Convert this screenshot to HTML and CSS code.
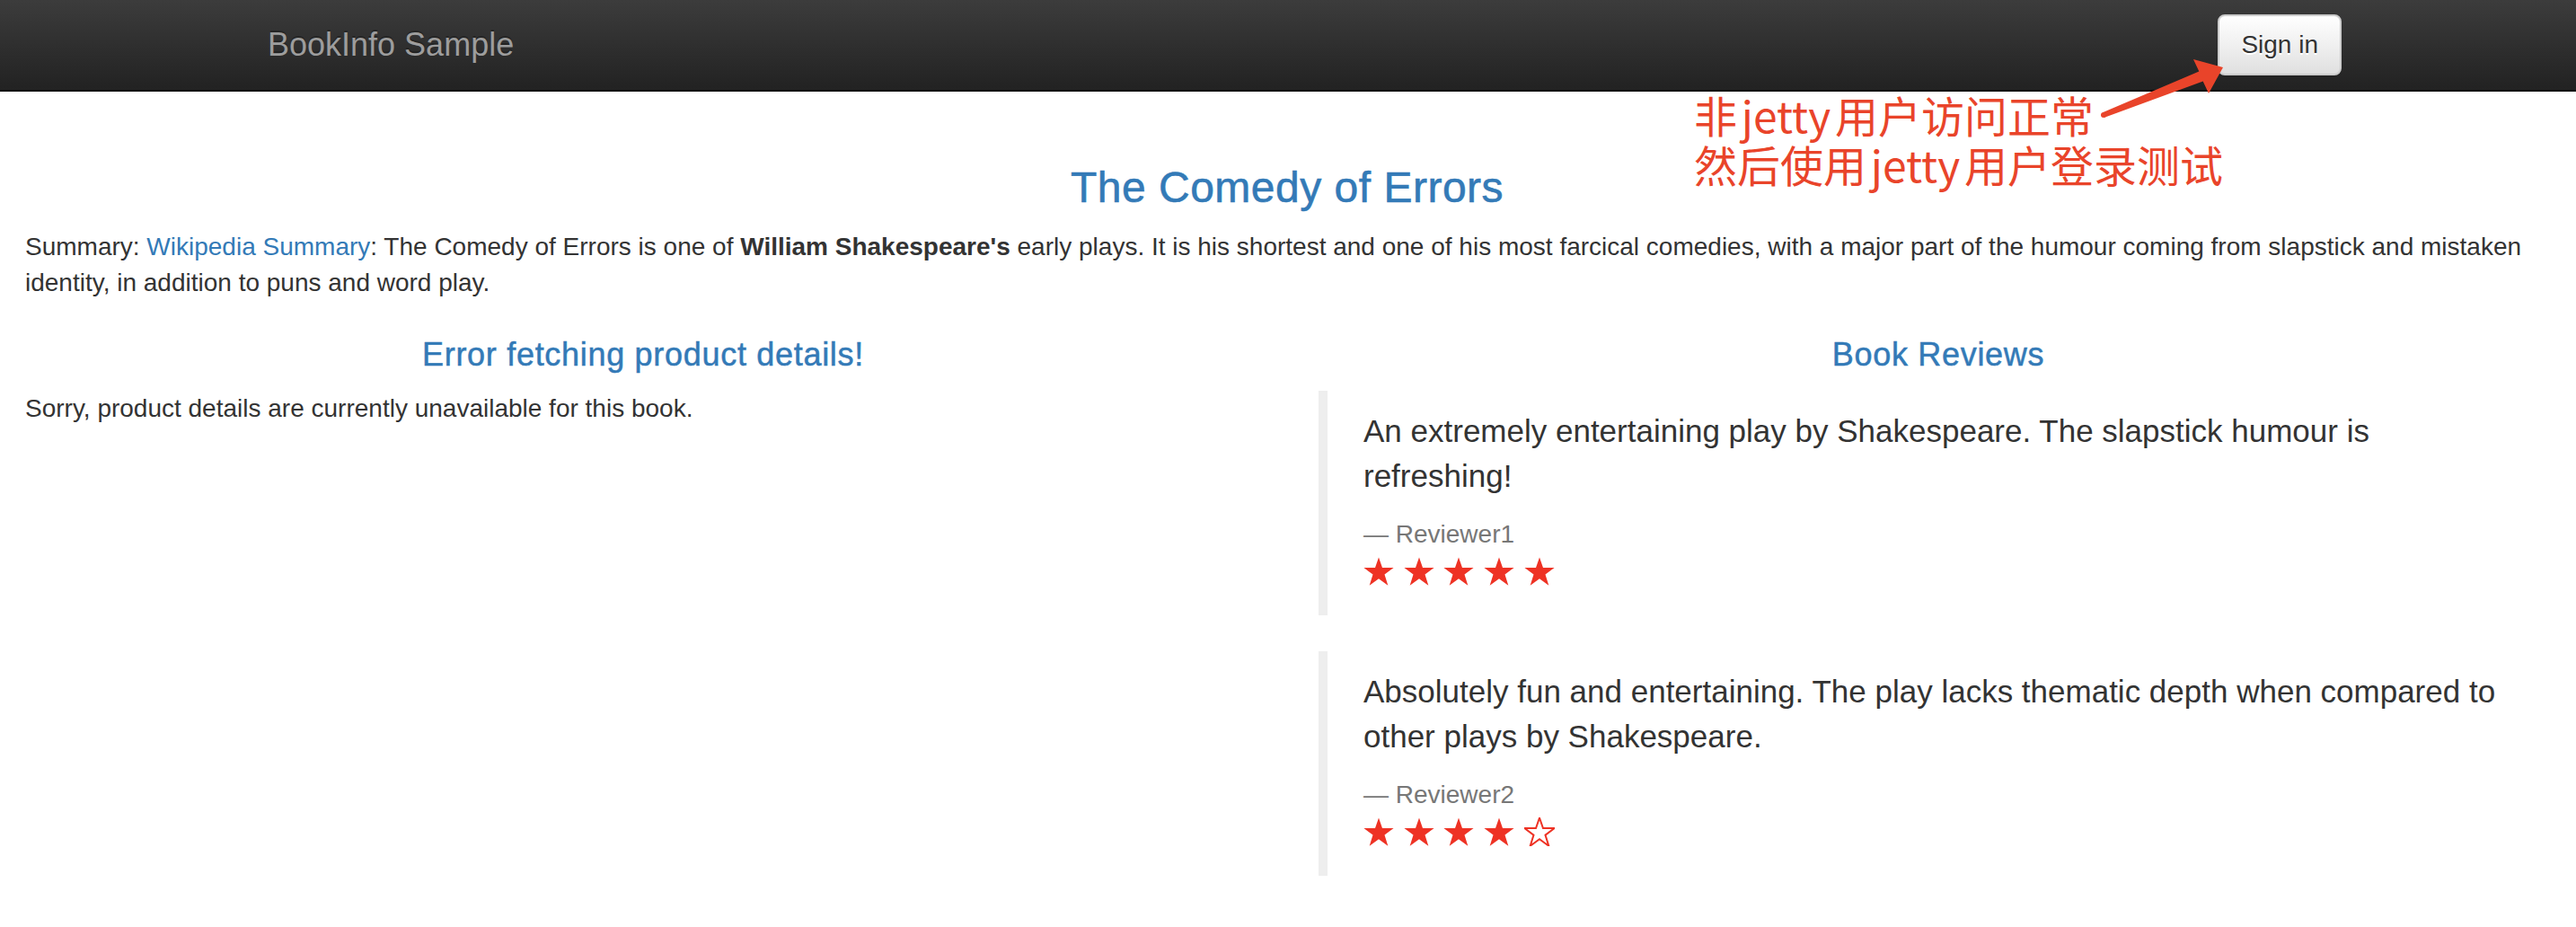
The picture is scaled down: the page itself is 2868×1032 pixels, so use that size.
FILE: index.html
```html
<!DOCTYPE html>
<html lang="en">
<head>
<meta charset="utf-8">
<title>Simple Bookstore App</title>
<link rel="stylesheet" href="styles.css">
</head>
<body>
<svg class="defs" width="0" height="0" aria-hidden="true">
  <defs>
    <symbol id="star" viewBox="0 0 34 32">
      <polygon points="17,0.5 21,12 33.6,12.1 23.5,19.6 27.3,31.7 17,24.3 6.7,31.7 10.5,19.6 0.4,12.1 13,12"/>
    </symbol>
  </defs>
</svg>

<nav class="navbar">
  <div class="navbar-inner">
    <a class="brand" href="#">BookInfo Sample</a>
    <button class="btn-signin" type="button">Sign in</button>
  </div>
</nav>

<div class="annotation">
  <div class="note">非 jetty 用户访问正常<br>然后使用 jetty 用户登录测试</div>
  <svg class="arrow" width="150" height="80" viewBox="0 0 150 80">
    <circle cx="10" cy="68" r="3"/>
    <polygon points="8.9,65.2 116.3,19.4 110,6 143,15 127,44 120.7,30.6 11.1,70.8"/>
  </svg>
</div>

<main class="page">
  <h3 class="title">The Comedy of Errors</h3>
  <p class="summary"><span>Summary: </span><a href="#">Wikipedia Summary</a><span>: The Comedy of Errors is one of </span><b>William Shakespeare's</b><span> early plays. It is his shortest and one of his most farcical comedies, with a major part of the humour coming from slapstick and mistaken </span><span>identity, in addition to puns and word play.</span></p>

  <div class="cols">
    <section class="col col-left">
      <h4 class="col-title">Error fetching product details!</h4>
      <p>Sorry, product details are currently unavailable for this book.</p>
    </section>
    <section class="col col-right">
      <h4 class="col-title">Book Reviews</h4>
      <blockquote class="review">
        <p>An extremely entertaining play by Shakespeare. The slapstick humour is refreshing!</p>
        <small class="reviewer">Reviewer1</small>
        <div class="stars">
          <svg class="star"><use href="#star"/></svg>
          <svg class="star"><use href="#star"/></svg>
          <svg class="star"><use href="#star"/></svg>
          <svg class="star"><use href="#star"/></svg>
          <svg class="star"><use href="#star"/></svg>
        </div>
      </blockquote>
      <blockquote class="review">
        <p>Absolutely fun and entertaining. The play lacks thematic depth when compared to other plays by Shakespeare.</p>
        <small class="reviewer">Reviewer2</small>
        <div class="stars">
          <svg class="star"><use href="#star"/></svg>
          <svg class="star"><use href="#star"/></svg>
          <svg class="star"><use href="#star"/></svg>
          <svg class="star"><use href="#star"/></svg>
          <svg class="star star-empty"><use href="#star"/></svg>
        </div>
      </blockquote>
    </section>
  </div>
</main>
</body>
</html>
```

FILE: styles.css
```css
* { box-sizing: border-box; }

html, body {
  margin: 0;
  padding: 0;
  background: #fff;
}

body {
  font-family: "Liberation Sans", Arial, sans-serif;
  font-size: 28px;
  line-height: 40px;
  color: #333;
  position: relative;
}

.defs { position: absolute; width: 0; height: 0; overflow: hidden; }

a { color: #337ab7; text-decoration: none; }

/* Navbar */
.navbar {
  height: 102px;
  background: linear-gradient(to bottom, #3c3c3c 0, #222 100%);
  border-bottom: 2px solid #080808;
  margin-bottom: 40px;
}

.navbar-inner {
  width: 2346px;
  margin: 0 auto;
  height: 100px;
  display: flex;
  justify-content: space-between;
  align-items: flex-start;
}

.brand {
  display: block;
  padding: 30px 30px 30px 37px;
  font-size: 36px;
  line-height: 40px;
  color: #9d9d9d;
  text-shadow: 0 -2px 0 rgba(0, 0, 0, .25);
}

.btn-signin {
  margin-top: 16px;
  height: 68px;
  padding: 12px 24px;
  font-family: "Liberation Sans", Arial, sans-serif;
  font-size: 28px;
  line-height: 40px;
  color: #333;
  background: linear-gradient(to bottom, #fff 0, #e0e0e0 100%);
  border: 2px solid #ccc;
  border-radius: 8px;
  text-shadow: 0 2px 0 #fff;
  box-shadow: inset 0 2px 0 rgba(255, 255, 255, .15), 0 2px 2px rgba(0, 0, 0, .075);
}

/* Annotation overlay */
.annotation {
  position: absolute;
  left: 1886px;
  top: 100px;
  width: 600px;
  height: 130px;
}

.note {
  font-family: "Noto Sans CJK SC", "Liberation Sans", sans-serif;
  font-size: 48px;
  line-height: 55px;
  word-spacing: -6px;
  color: #e9442a;
  white-space: nowrap;
}

.arrow {
  position: absolute;
  left: 446px;
  top: -40px;
  fill: #e9442a;
}

/* Page */
.page {
  padding: 0 30px 0 28px;
}

.title {
  margin: 80px 0 20px;
  font-size: 48px;
  line-height: 53px;
  font-weight: 500;
  letter-spacing: 0.5px;
  color: #337ab7;
  text-align: center;
  -webkit-text-stroke: 0.6px #337ab7;
}

.summary {
  margin: 0 0 20px;
}

.summary b { font-weight: 700; }

.cols {
  margin: 0 -30px 0 -28px;
  display: grid;
  grid-template-columns: 1fr 1fr;
}

.col-left { padding: 0 30px 0 28px; }
.col-right { padding: 0 30px 0 34px; }

.col p { margin: 0 0 20px; }

.col-title {
  margin: 20px 0 20px;
  font-size: 36px;
  line-height: 40px;
  font-weight: 500;
  letter-spacing: 0.7px;
  color: #337ab7;
  text-align: center;
  -webkit-text-stroke: 0.5px #337ab7;
}

.col-right .col-title { padding-left: 10px; }

.review {
  margin: 0 0 40px;
  padding: 20px 40px;
  border-left: 10px solid #eee;
  font-size: 35px;
  line-height: 50px;
}

.review p { margin: 0 0 20px; }

.reviewer {
  display: block;
  font-size: 28px;
  line-height: 40px;
  color: #777;
}

.reviewer::before { content: "\2014 \00A0"; }

.stars {
  height: 50px;
  padding-top: 5px;
  display: flex;
  gap: 10.7px;
}

.star {
  width: 34px;
  height: 32px;
  fill: #ee3224;
}

.star-empty {
  fill: #fff;
  stroke: #ee3224;
  stroke-width: 2px;
}
```
